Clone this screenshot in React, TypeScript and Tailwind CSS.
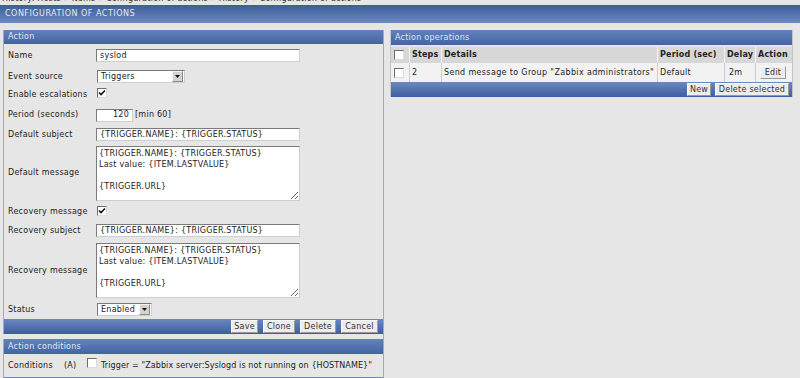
import React from "react";

const headBar = "bg-linear-to-b from-[#6383bd] to-[#4463a2] text-[#dfe7f5]";
const footBar = "bg-linear-to-b from-[#6a89c3] to-[#3d5d9e]";

const Check = ({ checked = false }: { checked?: boolean }) => (
  <span className="inline-flex w-[10px] h-[10px] bg-white border border-t-[#6d6d6d] border-l-[#6d6d6d] border-b-[#dcdcdc] border-r-[#dcdcdc] items-center justify-center">
    {checked && (
      <svg width="8" height="8" viewBox="0 0 8 8">
        <path d="M1 3.5 L3 5.5 L7 1.5" stroke="#111" strokeWidth="1.6" fill="none" />
      </svg>
    )}
  </span>
);

const Field = ({ value, w, right = false }: { value: string; w: string; right?: boolean }) => (
  <div
    className={`${w} h-[13px] bg-white border border-t-[#7a7a7a] border-l-[#7a7a7a] border-b-[#cfcfcf] border-r-[#cfcfcf] px-[3px] flex items-center leading-none whitespace-nowrap overflow-hidden ${
      right ? "justify-end" : ""
    }`}
  >
    {value}
  </div>
);

const Select = ({ value, w }: { value: string; w: string }) => (
  <div className={`${w} h-[13px] bg-white border border-t-[#7a7a7a] border-l-[#7a7a7a] border-b-[#cfcfcf] border-r-[#cfcfcf] flex items-center`}>
    <span className="flex-1 px-[3px] leading-none">{value}</span>
    <span className="w-[11px] h-[11px] mr-[1px] bg-[#d6d3cc] border border-t-[#f4f4f4] border-l-[#f4f4f4] border-b-[#8a8a8a] border-r-[#8a8a8a] flex items-center justify-center">
      <svg width="5" height="3" viewBox="0 0 5 3">
        <path d="M0 0 H5 L2.5 3 Z" fill="#111" />
      </svg>
    </span>
  </div>
);

const Area = ({ value }: { value: string }) => (
  <textarea
    readOnly
    value={value}
    className="w-[204px] h-[55px] bg-white border border-t-[#7a7a7a] border-l-[#7a7a7a] border-b-[#cfcfcf] border-r-[#cfcfcf] px-[2px] py-[1px] text-[8px] tracking-[0.25px] leading-[11px] text-[#222] outline-none overflow-hidden font-['DejaVu_Sans',sans-serif]"
  />
);

const Btn = ({ label, w }: { label: string; w: string }) => (
  <div className={`${w} h-[13px] bg-[#ececec] border border-[#f8f8f8] border-b-[#9a9a9a] border-r-[#9a9a9a] flex items-center justify-center text-[#333] leading-none whitespace-nowrap`}>
    {label}
  </div>
);

const Row = ({ label, h, children }: { label: string; h: string; children: React.ReactNode }) => (
  <div className={`flex items-center ${h}`}>
    <div className="w-[92px] pl-[4px] text-[#222] whitespace-nowrap">{label}</div>
    <div className="flex items-center gap-[2px]">{children}</div>
  </div>
);

const message = "{TRIGGER.NAME}: {TRIGGER.STATUS}\nLast value: {ITEM.LASTVALUE}\n\n{TRIGGER.URL}";

const ops = [
  { steps: "2", details: 'Send message to Group "Zabbix administrators"', period: "Default", delay: "2m" },
];

export default function App() {
  return (
    <div className="w-[800px] h-[378px] overflow-hidden bg-[#e6e6e6] text-[8px] tracking-[0.25px] text-[#222] font-['DejaVu_Sans',sans-serif]">
      <div className="h-[5px] overflow-hidden">
        <div className="-mt-[7px] pl-[2px] whitespace-nowrap text-[#333] leading-[11px]">
          History: Hosts » Items » Configuration of actions » History » Configuration of actions
        </div>
      </div>
      <div className="h-[18px] bg-linear-to-b from-[#3f5e98] to-[#6a89c1] flex items-center pl-[5px] text-[#e3eaf6] tracking-[0.5px]">
        CONFIGURATION OF ACTIONS
      </div>

      <div className="flex items-start gap-[6px] pl-[3px] pt-[7px]">
        <div className="w-[381px] h-[360px] flex flex-col gap-[5px] border-r border-[#a8a8a8]">
          <div className="border-l border-[#a8a8a8]">
            <div className={`h-[14px] flex items-center pl-[4px] ${headBar}`}>Action</div>
            <Row label="Name" h="h-[23px]">
              <Field value="syslod" w="w-[204px]" />
            </Row>
            <Row label="Event source" h="h-[19px]">
              <div className="pl-[1px]">
                <Select value="Triggers" w="w-[88px]" />
              </div>
            </Row>
            <Row label="Enable escalations" h="h-[17px]">
              <div className="pl-[1px]">
                <Check checked />
              </div>
            </Row>
            <Row label="Period (seconds)" h="h-[24px]">
              <Field value="120" w="w-[37px]" right />
              <span>[min 60]</span>
            </Row>
            <Row label="Default subject" h="h-[15px]">
              <Field value="{TRIGGER.NAME}: {TRIGGER.STATUS}" w="w-[204px]" />
            </Row>
            <Row label="Default message" h="h-[62px]">
              <Area value={message} />
            </Row>
            <Row label="Recovery message" h="h-[16px]">
              <div className="pl-[1px]">
                <Check checked />
              </div>
            </Row>
            <Row label="Recovery subject" h="h-[21px]">
              <Field value="{TRIGGER.NAME}: {TRIGGER.STATUS}" w="w-[204px]" />
            </Row>
            <Row label="Recovery message" h="h-[59px]">
              <Area value={message} />
            </Row>
            <Row label="Status" h="h-[19px]">
              <div className="pl-[1px]">
                <Select value="Enabled" w="w-[55px]" />
              </div>
            </Row>
            <div className={`h-[15px] flex items-center justify-end gap-[5px] pr-[5px] ${footBar}`}>
              <Btn label="Save" w="w-[27px]" />
              <Btn label="Clone" w="w-[32px]" />
              <Btn label="Delete" w="w-[36px]" />
              <Btn label="Cancel" w="w-[37px]" />
            </div>
          </div>

          <div className="border-l border-[#a8a8a8]">
            <div className={`h-[15px] flex items-center pl-[4px] ${headBar}`}>Action conditions</div>
            <div className="h-[23px] flex items-center pl-[4px] whitespace-nowrap">
              <span className="w-[56px]">Conditions</span>
              <span className="w-[23px]">(A)</span>
              <span className="mr-[4px] -mt-[2px]">
                <Check />
              </span>
              <span className="tracking-[0.1px]">Trigger = "Zabbix server:Syslogd is not running on {"{HOSTNAME}"}"</span>
            </div>
            <div className={`h-[15px] flex items-start pt-[1px] justify-end gap-[1px] pr-[6px] ${footBar}`}>
              <Btn label="Add" w="w-[27px]" />
              <Btn label="Delete selected" w="w-[74px]" />
            </div>
          </div>
        </div>

        <div className="w-[403px] border-x border-[#c4c4c4]">
          <div className={`h-[15px] flex items-center pl-[4px] ${headBar}`}>Action operations</div>
          <div className="mt-[2px] grid grid-cols-[19px_32px_216px_67px_31px_1fr] whitespace-nowrap">
            <div className="h-[16px] bg-[#d7d7d7] border-r border-[#f4f4f4] flex items-center pl-[3px]">
              <Check />
            </div>
            {["Steps", "Details", "Period (sec)", "Delay", "Action"].map((h, i) => (
              <div
                key={h}
                className={`h-[16px] bg-[#d7d7d7] flex items-center pl-[2px] font-bold text-[#222] tracking-[0.2px] ${
                  i < 4 ? "border-r border-[#f4f4f4]" : ""
                }`}
              >
                {h}
              </div>
            ))}
            {ops.map((o) => (
              <React.Fragment key={o.steps}>
                <div className="h-[19px] bg-[#f2f2f2] border-r border-[#cdcdcd] flex items-center pl-[3px]">
                  <Check />
                </div>
                <div className="h-[19px] bg-[#f2f2f2] border-r border-[#cdcdcd] flex items-center pl-[2px]">{o.steps}</div>
                <div className="h-[19px] bg-[#f2f2f2] border-r border-[#cdcdcd] flex items-center pl-[2px] tracking-[0.35px]">
                  {o.details}
                </div>
                <div className="h-[19px] bg-[#f2f2f2] border-r border-[#cdcdcd] flex items-center pl-[2px]">{o.period}</div>
                <div className="h-[19px] bg-[#f2f2f2] border-r border-[#cdcdcd] flex items-center pl-[4px]">{o.delay}</div>
                <div className="h-[19px] bg-[#f2f2f2] flex items-center pl-[4px]">
                  <Btn label="Edit" w="w-[26px]" />
                </div>
              </React.Fragment>
            ))}
          </div>
          <div className={`h-[15px] flex items-center justify-end gap-[4px] pr-[3px] ${footBar}`}>
            <Btn label="New" w="w-[24px]" />
            <Btn label="Delete selected" w="w-[74px]" />
          </div>
        </div>
      </div>
    </div>
  );
}
